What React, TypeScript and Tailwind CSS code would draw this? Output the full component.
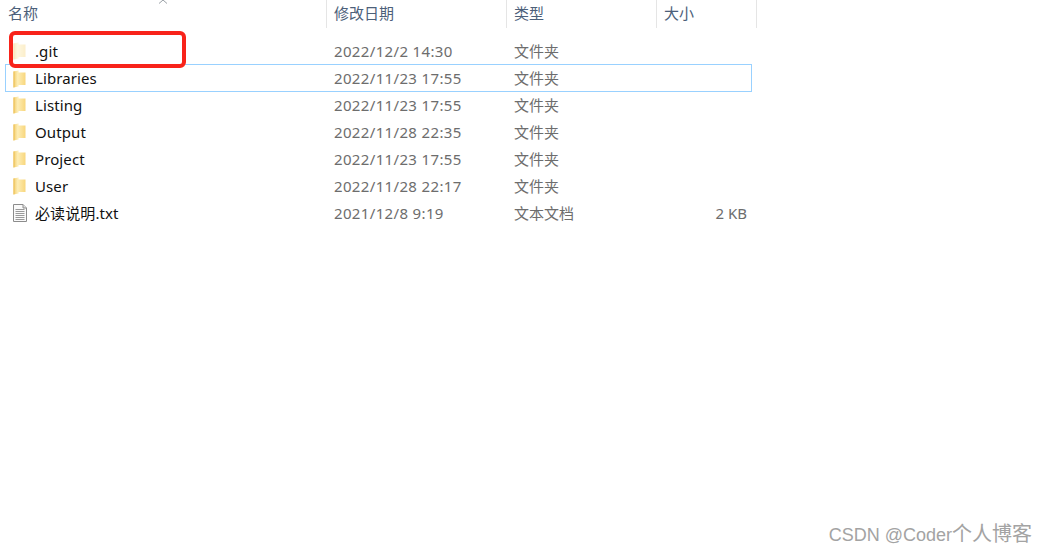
const font = { fontFamily: '"Noto Sans", "Noto Sans CJK SC", sans-serif' };

function Folder({ faded }: { faded?: boolean }) {
  const id = faded ? "fa" : "fb";
  return (
    <svg width="13" height="18" viewBox="0 0 13 18" className={faded ? "opacity-40" : ""}>
      <defs>
        <linearGradient id={id} x1="0" y1="0" x2="1" y2="0">
          <stop offset="0" stopColor="#f3cc6a" />
          <stop offset="0.35" stopColor="#fdedb5" />
          <stop offset="1" stopColor="#f8d67c" />
        </linearGradient>
      </defs>
      <path d="M0.5 1.5 L5.5 0.5 L5.5 2.5 L12.5 2.5 L12.5 15 L5.5 15 L5.5 16.5 L0.5 17.5 Z" fill={`url(#${id})`} />
      <path d="M0.5 1.5 L1.5 1.3 L1.5 17.3 L0.5 17.5 Z" fill="#eec25a" />
    </svg>
  );
}

function FileIcon() {
  return (
    <svg width="14" height="18" viewBox="0 0 14 18">
      <path d="M0.5 0.5 H10 L13.5 4 V17.5 H0.5 Z" fill="#fafafa" stroke="#8c8c8c" />
      <path d="M10 0.5 V4 H13.5" fill="#e2e2e2" stroke="#8c8c8c" />
      <path d="M2.5 5.5 H11.5 M2.5 7.5 H11.5 M2.5 9.5 H11.5 M2.5 11.5 H11.5 M2.5 13.5 H11.5 M2.5 15.5 H11.5" stroke="#9a9a9a" />
    </svg>
  );
}

const rows = [
  { name: ".git", date: "2022/12/2 14:30", type: "文件夹", size: "", faded: true },
  { name: "Libraries", date: "2022/11/23 17:55", type: "文件夹", size: "", selected: true },
  { name: "Listing", date: "2022/11/23 17:55", type: "文件夹", size: "" },
  { name: "Output", date: "2022/11/28 22:35", type: "文件夹", size: "" },
  { name: "Project", date: "2022/11/23 17:55", type: "文件夹", size: "" },
  { name: "User", date: "2022/11/28 22:17", type: "文件夹", size: "" },
  { name: "必读说明.txt", date: "2021/12/8 9:19", type: "文本文档", size: "2 KB", file: true },
];

export default function App() {
  return (
    <div className="relative h-[555px] w-[1046px] overflow-hidden bg-white" style={font}>
      <div className="flex h-[28px] text-[15px] text-[#4c607a]">
        <div className="w-[326px] pl-[8px] leading-[27px]">名称</div>
        <div className="w-[180px] border-l border-[#e5e5e5] pl-[7px] leading-[27px]">修改日期</div>
        <div className="w-[150px] border-l border-[#e5e5e5] pl-[7px] leading-[27px]">类型</div>
        <div className="w-[101px] border-r border-l border-[#e5e5e5] pl-[7px] leading-[27px]">大小</div>
      </div>
      <div className="ml-[5px] mt-[9px] flex w-[747px] flex-col">
        {rows.map((r) => (
          <div
            key={r.name}
            className={`flex items-center pt-px text-[15px] ${r.selected ? "-mb-px h-[28px] border border-[#99d1ff]" : "h-[27px] border border-transparent"}`}
          >
            <div className="flex w-[321px] items-center pl-[7px]">
              <span className="flex w-[22px] items-center">{r.file ? <FileIcon /> : <Folder faded={r.faded} />}</span>
              <span className="tracking-[0.1px] text-[#111]">{r.name}</span>
            </div>
            <div className="w-[180px] pl-[7px] tracking-[0.35px] text-[#6d6d6d]">{r.date}</div>
            <div className="w-[150px] pl-[7px] text-[#6d6d6d]">{r.type}</div>
            <div className="w-[90px] text-right text-[#6d6d6d]">{r.size}</div>
          </div>
        ))}
      </div>
      <div className="absolute left-[9px] top-[31px] h-[37px] w-[177px] rounded-[6px] border-4 border-[#f8231a]" />
      <svg className="absolute left-[158px] top-0" width="12" height="4" viewBox="0 0 12 4">
        <path d="M1 3.5 L5 0 L9 3.5" fill="none" stroke="#9aa0a6" />
      </svg>
      <div className="absolute bottom-[7px] right-[14px] text-[20px] leading-[26px] text-[#a3a3a3]" style={{ fontFamily: '"Liberation Sans", "Noto Sans CJK SC", sans-serif' }}>
        <span className="text-[18px]">CSDN @Coder</span>个人博客
      </div>
    </div>
  );
}
